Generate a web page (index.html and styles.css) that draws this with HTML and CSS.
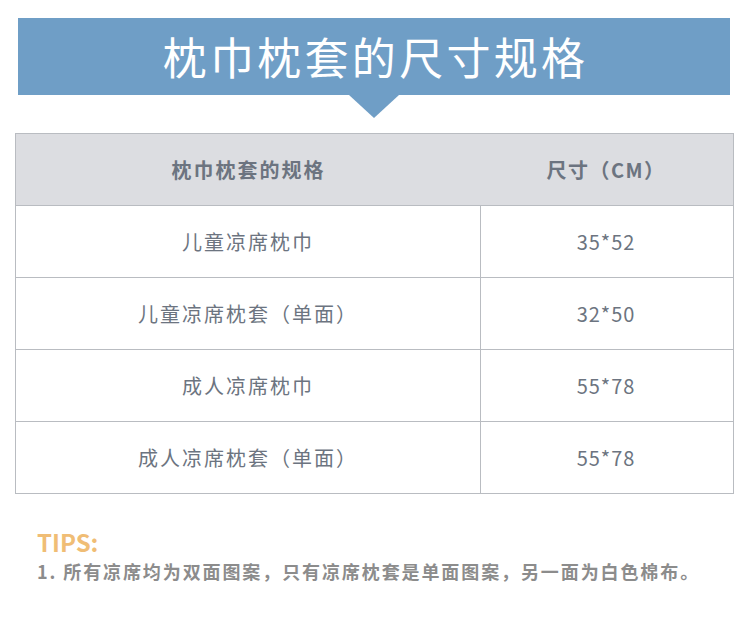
FILE: index.html
```html
<!DOCTYPE html>
<html lang="zh">
<head>
<meta charset="utf-8">
<link rel="stylesheet" href="styles.css">
</head>
<body>
<div class="page">
  <header class="banner">
    <h1 class="banner-title">枕巾枕套的尺寸规格</h1>
    <div class="banner-arrow"></div>
  </header>
  <div class="spec-table">
    <div class="row head">
      <div class="cell name">枕巾枕套的规格</div>
      <div class="cell size">尺寸（CM）</div>
    </div>
    <div class="row">
      <div class="cell name">儿童凉席枕巾</div>
      <div class="cell size">35*52</div>
    </div>
    <div class="row">
      <div class="cell name">儿童凉席枕套（单面）</div>
      <div class="cell size">32*50</div>
    </div>
    <div class="row">
      <div class="cell name">成人凉席枕巾</div>
      <div class="cell size">55*78</div>
    </div>
    <div class="row">
      <div class="cell name">成人凉席枕套（单面）</div>
      <div class="cell size">55*78</div>
    </div>
  </div>
  <div class="tips">
    <div class="tips-title">TIPS:</div>
    <div class="tips-text">1. 所有凉席均为双面图案，只有凉席枕套是单面图案，另一面为白色棉布。</div>
  </div>
</div>
</body>
</html>
```

FILE: styles.css
```css
* { box-sizing: border-box; }
html, body {
  margin: 0;
  padding: 0;
  background: #ffffff;
}
body {
  width: 750px;
  height: 628px;
  overflow: hidden;
  font-family: "Noto Sans CJK SC", "Noto Sans", sans-serif;
}
.page {
  padding-top: 18px;
}
.banner {
  position: relative;
  margin: 0 20px 0 18px;
  height: 77px;
  background: #6f9ec6;
  display: flex;
  align-items: center;
  justify-content: center;
}
.banner-title {
  margin: 0;
  color: #ffffff;
  font-weight: 400;
  font-size: 44px;
  letter-spacing: 3.3px;
  line-height: 1;
  padding-left: 3px;
  padding-bottom: 1px;
}
.banner-arrow {
  position: absolute;
  left: 331px;
  top: 77px;
  width: 0;
  height: 0;
  border-left: 25px solid transparent;
  border-right: 25px solid transparent;
  border-top: 23px solid #6f9ec6;
}
.spec-table {
  margin: 38px 16px 0 15px;
  border: 1px solid #b9bcc1;
}
.row {
  display: grid;
  grid-template-columns: 465px 1fr;
  height: 72px;
  border-top: 1px solid #b9bcc1;
}
.row:first-child { border-top: none; height: 71px; }
.cell {
  display: flex;
  align-items: center;
  justify-content: center;
  color: #6c7480;
  font-size: 20px;
  letter-spacing: 2px;
}
.cell.name {
  border-right: 1px solid #b9bcc1;
}
.cell.size {
  letter-spacing: 1px;
  padding-right: 2px;
}
.head {
  background: #dcdde1;
}
.head .cell {
  font-weight: 700;
  font-size: 20px;
  letter-spacing: 2px;
}
.head .cell.size {
  letter-spacing: 1.5px;
}
.head .cell.name {
  border-right: none;
}
.tips {
  padding: 32px 0 0 37px;
}
.tips-title {
  color: #f0bd75;
  font-weight: 700;
  font-size: 24px;
  line-height: 32px;
}
.tips-text {
  color: #8c8c8c;
  font-weight: 700;
  font-size: 18px;
  letter-spacing: 1.9px;
  line-height: 26px;
}
```
